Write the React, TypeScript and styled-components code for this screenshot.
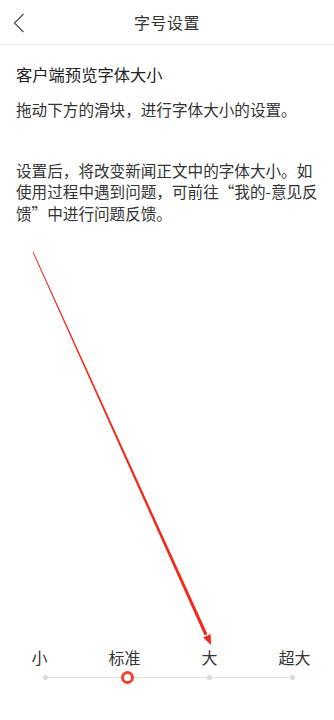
import React from "react";
import styled, { createGlobalStyle } from "styled-components";

const Global = createGlobalStyle`
  html, body { margin: 0; padding: 0; background: #fff; }
  body { font-family: "Noto Sans CJK SC", "Noto Sans", sans-serif; color: #333; }
`;

const Page = styled.div`
  position: relative;
  width: 334px;
  height: 720px;
  display: flex;
  flex-direction: column;
  overflow: hidden;
  background: #fff;
`;

const Header = styled.header`
  height: 44px;
  border-bottom: 1px solid #efefef;
  display: flex;
  align-items: center;
  justify-content: center;
  position: relative;
  flex-shrink: 0;
`;

const BackButton = styled.button`
  position: absolute;
  left: 5px;
  top: 9px;
  width: 28px;
  height: 28px;
  border: 0;
  background: none;
  padding: 0;
  display: flex;
  align-items: center;
  justify-content: center;
`;

const HeaderTitle = styled.h1`
  margin: 0;
  font-size: 16px;
  font-weight: 400;
  color: #333;
  letter-spacing: 0.5px;
`;

const Content = styled.main`
  padding: 17px 16px 0 16px;
  display: flex;
  flex-direction: column;
`;

const Title = styled.h2`
  margin: 0;
  font-size: 16.3px;
  line-height: 24px;
  font-weight: 400;
  color: #222;
`;

const Paragraph = styled.p<{ $gap: number }>`
  margin: ${(p) => p.$gap}px 0 0 0;
  font-size: 15.6px;
  line-height: 21.5px;
  color: #333;
`;

const SliderArea = styled.section`
  margin-top: auto;
  padding-bottom: 42px;
  display: flex;
  flex-direction: column;
`;

const Labels = styled.div`
  display: grid;
  grid-template-columns: repeat(4, 85px);
  margin-left: -3px;
`;

const Label = styled.span`
  text-align: center;
  font-size: 16px;
  line-height: 20px;
  color: #333;
`;

const Track = styled.div`
  position: relative;
  height: 1px;
  background: #e3e3e3;
  margin: 10px 42px 0 45px;
`;

const Dot = styled.span`
  position: absolute;
  top: -2px;
  width: 5px;
  height: 5px;
  margin-left: -2.5px;
  border-radius: 50%;
  background: #d9d9d9;
`;

const Thumb = styled.span`
  position: absolute;
  top: -6px;
  width: 7px;
  height: 7px;
  margin-left: -6.5px;
  border-radius: 50%;
  border: 3px solid #f4412d;
  background: #fff;
`;

const Overlay = styled.svg`
  position: absolute;
  left: 0;
  top: 0;
  width: 334px;
  height: 720px;
  pointer-events: none;
`;

const steps = ["小", "标准", "大", "超大"];

export default function App() {
  const current = 1;
  return (
    <>
      <Global />
      <Page>
        <Header>
          <BackButton aria-label="返回">
            <svg width="14" height="22" viewBox="0 0 14 22">
              <path d="M11.5 2 L2.5 11 L11.5 20" fill="none" stroke="#555" strokeWidth="1.3" />
            </svg>
          </BackButton>
          <HeaderTitle>字号设置</HeaderTitle>
        </Header>
        <Content>
          <Title>客户端预览字体大小</Title>
          <Paragraph $gap={13}>拖动下方的滑块，进行字体大小的设置。</Paragraph>
          <Paragraph $gap={39}>
            设置后，将改变新闻正文中的字体大小。如使用过程中遇到问题，可前往“我的-意见反馈”中进行问题反馈。
          </Paragraph>
        </Content>
        <SliderArea>
          <Labels>
            {steps.map((s) => (
              <Label key={s}>{s}</Label>
            ))}
          </Labels>
          <Track>
            {steps.map((s, i) =>
              i === current ? (
                <Thumb key={s} style={{ left: `${(i / 3) * 100}%` }} />
              ) : (
                <Dot key={s} style={{ left: `${(i / 3) * 100}%` }} />
              )
            )}
          </Track>
        </SliderArea>
        <Overlay viewBox="0 0 334 720">
          <polygon points="32.6,252.2 33.4,251.8 207.4,634 204.6,635.4" fill="#f5261a" />
          <polygon points="211,645 210.6,634 203.2,637.6" fill="#f5261a" />
        </Overlay>
      </Page>
    </>
  );
}
